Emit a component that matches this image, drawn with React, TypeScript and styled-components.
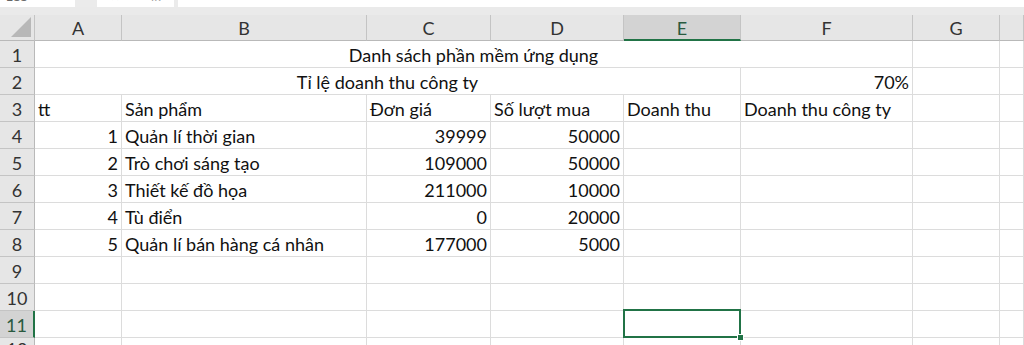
import React from "react";
import styled, { createGlobalStyle, css } from "styled-components";

const GREEN = "#217346";
const GRID = "#dcdcdc";
const HEAD_BG = "#e6e6e6";
const HEAD_ACTIVE = "#d3d3d3";
const HEAD_LINE = "#c4c4c4";

const Global = createGlobalStyle`
  html, body { margin: 0; padding: 0; background: #ffffff; }
  body {
    width: 1024px;
    height: 345px;
    overflow: hidden;
    font-family: Lato, "Open Sans", "Noto Sans", sans-serif;
  }
`;

const Window = styled.div`
  display: flex;
  flex-direction: column;
  width: 1024px;
  height: 345px;
  background: #ebebeb;
  overflow: hidden;
`;

const FormulaBar = styled.div`
  display: flex;
  align-items: flex-end;
  height: 7px;
  overflow: hidden;
  flex-shrink: 0;
`;

const NameBox = styled.div`
  width: 75px;
  height: 16px;
  flex-shrink: 0;
  background: #ffffff;
  color: #666;
  font-size: 12px;
  line-height: 12px;
  padding-left: 6px;
  box-sizing: border-box;
`;

const BarGap = styled.div<{ $w: number }>`
  width: ${(p) => p.$w}px;
  flex-shrink: 0;
`;

const IconBox = styled.div`
  width: 77px;
  height: 16px;
  flex-shrink: 0;
  background: #ffffff;
  display: flex;
  justify-content: space-around;
  padding: 0 8px;
  box-sizing: border-box;
  color: #a0a0a0;
  font-size: 12px;
  line-height: 12px;
`;

const FormulaInput = styled.div`
  flex: 1;
  height: 16px;
  background: #ffffff;
`;

const Band = styled.div`
  height: 8px;
  flex-shrink: 0;
  background: #eaeaea;
`;

const Sheet = styled.div`
  flex: 1;
  display: grid;
  grid-template-columns: 35px 87px 245px 124px 133px 117px 172px 87px 1fr;
  grid-template-rows: 26px repeat(11, 27px) 1fr;
  background: #ffffff;
  font-size: 18px;
  color: #111;
`;

const Corner = styled.div`
  position: relative;
  background: ${HEAD_BG};
  border-right: 1px solid ${HEAD_LINE};
  border-bottom: 1px solid #b9b9b9;
  box-sizing: border-box;
`;

const CornerTriangle = styled.svg`
  position: absolute;
  right: 3px;
  bottom: 3px;
`;

const ColHead = styled.div<{ $active?: boolean }>`
  display: flex;
  align-items: center;
  justify-content: center;
  box-sizing: border-box;
  background: ${(p) => (p.$active ? HEAD_ACTIVE : HEAD_BG)};
  border-right: 1px solid ${HEAD_LINE};
  border-bottom: ${(p) => (p.$active ? `2px solid ${GREEN}` : "1px solid #b9b9b9")};
  color: ${(p) => (p.$active ? "#2a5a40" : "#333")};
  font-size: 18px;
  padding-top: ${(p) => (p.$active ? "1px" : "0")};
`;

const RowHead = styled.div<{ $active?: boolean }>`
  display: flex;
  align-items: flex-end;
  justify-content: center;
  box-sizing: border-box;
  padding-bottom: 1px;
  background: ${(p) => (p.$active ? HEAD_ACTIVE : HEAD_BG)};
  border-bottom: 1px solid ${HEAD_LINE};
  border-right: ${(p) => (p.$active ? `2px solid ${GREEN}` : "1px solid #b9b9b9")};
  color: ${(p) => (p.$active ? "#2a5a40" : "#333")};
  font-size: 18px;
  line-height: 22px;
`;

const Cell = styled.div<{ $span?: number; $align?: "left" | "right" | "center"; $selected?: boolean }>`
  position: relative;
  display: flex;
  align-items: flex-end;
  box-sizing: border-box;
  padding: 0 3px 1px 3px;
  border-right: 1px solid ${GRID};
  border-bottom: 1px solid ${GRID};
  line-height: 22px;
  white-space: nowrap;
  grid-column: span ${(p) => p.$span ?? 1};
  justify-content: ${(p) =>
    p.$align === "right" ? "flex-end" : p.$align === "center" ? "center" : "flex-start"};
  ${(p) =>
    p.$selected &&
    css`
      &::after {
        content: "";
        position: absolute;
        left: -1px;
        top: -2px;
        right: -1px;
        bottom: -1px;
        border: 2px solid ${GREEN};
        pointer-events: none;
      }
    `}
`;

const FillHandle = styled.span`
  position: absolute;
  right: -4px;
  bottom: -4px;
  width: 5px;
  height: 5px;
  background: ${GREEN};
  border: 1px solid #ffffff;
  z-index: 2;
`;

type CellDef = { t?: string; span?: number; align?: "left" | "right" | "center" };

const columns = ["A", "B", "C", "D", "E", "F", "G", ""];

const L = (t: string): CellDef => ({ t, align: "left" });
const R = (t: string): CellDef => ({ t, align: "right" });
const E: CellDef = {};

const rows: CellDef[][] = [
  [{ t: "Danh sách phần mềm ứng dụng", span: 6, align: "center" }, E, E],
  [{ t: "Tỉ lệ doanh thu công ty", span: 5, align: "center" }, R("70%"), E, E],
  [L("tt"), L("Sản phẩm"), L("Đơn giá"), L("Số lượt mua"), L("Doanh thu"), L("Doanh thu công ty"), E, E],
  [R("1"), L("Quản lí thời gian"), R("39999"), R("50000"), E, E, E, E],
  [R("2"), L("Trò chơi sáng tạo"), R("109000"), R("50000"), E, E, E, E],
  [R("3"), L("Thiết kế đồ họa"), R("211000"), R("10000"), E, E, E, E],
  [R("4"), L("Tù điển"), R("0"), R("20000"), E, E, E, E],
  [R("5"), L("Quản lí bán hàng cá nhân"), R("177000"), R("5000"), E, E, E, E],
  [E, E, E, E, E, E, E, E],
  [E, E, E, E, E, E, E, E],
  [E, E, E, E, E, E, E, E],
  [E, E, E, E, E, E, E, E],
];

const ACTIVE_ROW = 11;
const ACTIVE_COL = 4; // column E

export default function App() {
  return (
    <>
      <Global />
      <Window>
        <FormulaBar>
          <NameBox>E11</NameBox>
          <BarGap $w={22} />
          <IconBox>
            <span>✕</span>
            <span>✓</span>
            <span>fx</span>
          </IconBox>
          <BarGap $w={4} />
          <FormulaInput />
        </FormulaBar>
        <Band />
        <Sheet>
          <Corner>
            <CornerTriangle width="20" height="20" viewBox="0 0 20 20">
              <polygon points="20,0 20,20 0,20" fill="#b8b8b8" />
            </CornerTriangle>
          </Corner>
          {columns.map((c, i) => (
            <ColHead key={`h${i}`} $active={i === ACTIVE_COL}>
              {c}
            </ColHead>
          ))}
          {rows.map((r, ri) => {
            const rowNo = ri + 1;
            let col = 0;
            return (
              <React.Fragment key={`r${ri}`}>
                <RowHead $active={rowNo === ACTIVE_ROW}>{rowNo}</RowHead>
                {r.map((c, ci) => {
                  const start = col;
                  col += c.span ?? 1;
                  const selected = rowNo === ACTIVE_ROW && start === ACTIVE_COL;
                  return (
                    <Cell key={ci} $span={c.span} $align={c.align} $selected={selected}>
                      {c.t}
                      {selected && <FillHandle />}
                    </Cell>
                  );
                })}
              </React.Fragment>
            );
          })}
        </Sheet>
      </Window>
    </>
  );
}
